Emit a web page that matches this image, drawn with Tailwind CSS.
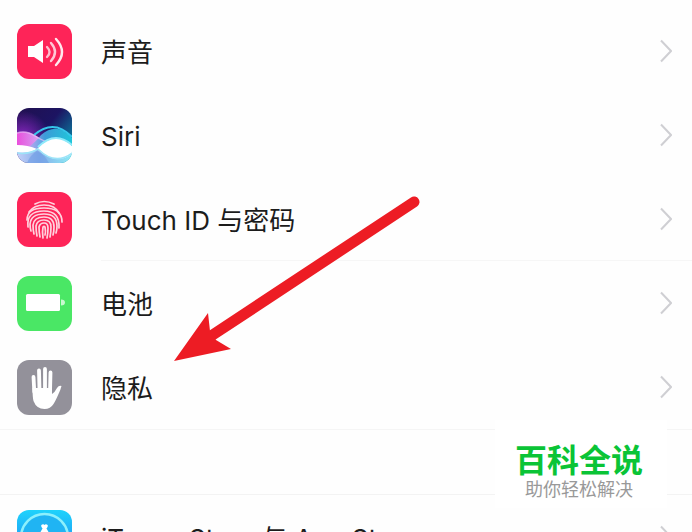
<!DOCTYPE html>
<html lang="zh-CN">
  <head>
    <meta charset="UTF-8" />
    <meta name="viewport" content="width=device-width, initial-scale=1.0" />
    <title>设置</title>
    <script src="https://cdn.jsdelivr.net/npm/@tailwindcss/browser@4"></script>
  </head>
  <body class="relative h-screen overflow-hidden bg-[#fefefe] font-[Inter,'Noto_Sans_CJK_SC',sans-serif] text-[26px] leading-8 text-[#1c1c1c]">
    <main class="pt-[9px]">
      <!-- 第一组 -->
      <ul class="border-b border-[#f5f5f5]">
        <li>
          <a href="#" class="flex h-[84px] items-center gap-[29px] pl-[17px] pr-5">
            <svg class="size-[55px] shrink-0" viewBox="0 0 55 55" fill="none">
              <rect width="55" height="55" rx="12" fill="#fe2458" />
              <path d="M11 22h6l9-6v23l-9-6h-6z" fill="#fff" />
              <g stroke="#fff" stroke-width="2.400" stroke-linecap="round">
                <path d="M30 23q5 5 0 10" opacity=".7" />
                <path d="M34 19q8 9 0 18" opacity=".75" />
                <path d="M39 15q12 13 0 26" opacity=".9" />
              </g>
            </svg>
            <span class="flex-1 pt-1">声音</span>
            <svg class="h-6 w-3 shrink-0" viewBox="0 0 12 24" fill="none" stroke="#cfcfd3" stroke-width="2">
              <path d="M1 1.500l10 10.500-10 10.500" />
            </svg>
          </a>
        </li>
        <li>
          <a href="#" class="flex h-[84px] items-center gap-[29px] pl-[17px] pr-5">
            <svg class="size-[55px] shrink-0" viewBox="0 0 55 55" fill="none">
              <defs>
                <clipPath id="siriClip"><rect width="55" height="55" rx="12" /></clipPath>
                <linearGradient id="siriSky" x1="0" y1="0" x2="1" y2=".8">
                  <stop offset="0" stop-color="#21104f" />
                  <stop offset=".5" stop-color="#1c1462" />
                  <stop offset="1" stop-color="#0596ae" />
                </linearGradient>
                <radialGradient id="siriPurple" cx=".1" cy=".55" r=".5">
                  <stop offset="0" stop-color="#8e27c4" />
                  <stop offset="1" stop-color="#8e27c4" stop-opacity="0" />
                </radialGradient>
                <linearGradient id="siriPink" x1="0" x2="1" y1="0" y2="0">
                  <stop offset="0" stop-color="#ea4fdc" />
                  <stop offset=".5" stop-color="#d69af0" />
                  <stop offset="1" stop-color="#8fd0f5" />
                </linearGradient>
                <linearGradient id="siriBlue" x1="0" x2="1" y1="0" y2="0">
                  <stop offset="0" stop-color="#c3a9ee" />
                  <stop offset=".4" stop-color="#3fa9e4" />
                  <stop offset="1" stop-color="#22cfe0" />
                </linearGradient>
                <linearGradient id="siriFloor" x1="0" x2="1" y1="0" y2="0">
                  <stop offset="0" stop-color="#c3d0f8" />
                  <stop offset=".4" stop-color="#86aeea" />
                  <stop offset="1" stop-color="#8decf6" />
                </linearGradient>
              </defs>
              <g clip-path="url(#siriClip)">
                <path d="M0 0h55v55H0z" fill="url(#siriSky)" />
                <path d="M0 0h55v55H0z" fill="url(#siriPurple)" />
                <path d="M0 25q9-3 18 2 12 8 22 14H0z" fill="url(#siriPink)" />
                <path d="M10 40q8-5 14-13 16-14 31 3v14H10z" fill="url(#siriBlue)" opacity=".9" />
                <path d="M17 27q20-17 38 2" stroke="#35c6ea" stroke-width="2" />
                <path d="M0 25q9-3 18 3 9 6 20 8" stroke="#edbdf6" stroke-width="1.500" opacity=".7" />
                <path d="M0 41h55v14H0z" fill="url(#siriFloor)" />
                <path d="M0 37q11 0 20 4 18-20 35-3v8q-17 12-35-5-9 5-20 3z" fill="#fff" />
                <path d="M21 39q17-17 34-2" stroke="#8feafa" stroke-width="2" />
                <path d="M0 45q11 2 21-4 17 17 34 4" stroke="#9ce3f8" stroke-width="1.500" />
                <path d="M20 43q7 3 12 12H10q3-8 10-12z" fill="#6f9ce4" opacity=".6" />
              </g>
            </svg>
            <span class="flex-1 pt-1">Siri</span>
            <svg class="h-6 w-3 shrink-0" viewBox="0 0 12 24" fill="none" stroke="#cfcfd3" stroke-width="2">
              <path d="M1 1.500l10 10.500-10 10.500" />
            </svg>
          </a>
        </li>
        <li>
          <a href="#" class="flex h-[84px] items-center gap-[29px] pl-[17px]">
            <svg class="size-[55px] shrink-0" viewBox="0 0 55 55" fill="none">
              <rect width="55" height="55" rx="12" fill="#fe2458" />
              <g stroke="#ffd3de" stroke-width="1.700" stroke-linecap="round">
                <path d="M18 12q9-5 19 0" />
                <path d="M12 20q5-7 15-7 11 0 15 8" />
                <path d="M10 28q0-12 17-12 18 0 18 14" />
                <path d="M11 35q-2-16 16-16 16 0 15 17" />
                <path d="M14 39q-1-3-1-7 1-10 14-10 13 0 13 12 0 4-1 7" />
                <path d="M17 42q-1-4-1-9 1-8 11-8 10 0 10 10 0 5-1 8" />
                <path d="M20 44q-1-5-1-10 1-6 8-6t7 7q0 5-1 10" />
                <path d="M23 45q-1-5-1-10 1-4 5-4t4 5q0 5-1 10" />
                <path d="M26 46q-1-6 0-11 1-1 2 0 1 5 0 8" />
              </g>
            </svg>
            <span class="flex h-full flex-1 items-center border-b border-[#f6f6f6] pr-5">
              <span class="flex-1 pt-1">Touch ID 与密码</span>
              <svg class="h-6 w-3 shrink-0" viewBox="0 0 12 24" fill="none" stroke="#cfcfd3" stroke-width="2">
                <path d="M1 1.500l10 10.500-10 10.500" />
              </svg>
            </span>
          </a>
        </li>
        <li>
          <a href="#" class="flex h-[84px] items-center gap-[29px] pl-[17px] pr-5">
            <svg class="size-[55px] shrink-0" viewBox="0 0 55 55">
              <rect width="55" height="55" rx="12" fill="#4ae765" />
              <rect x="9" y="18" width="34" height="17" rx="1.500" fill="#fff" />
              <path d="M44 23.500q4 0 4 3t-4 3z" fill="#c8f9d0" />
            </svg>
            <span class="flex-1 pt-1">电池</span>
            <svg class="h-6 w-3 shrink-0" viewBox="0 0 12 24" fill="none" stroke="#cfcfd3" stroke-width="2">
              <path d="M1 1.500l10 10.500-10 10.500" />
            </svg>
          </a>
        </li>
        <li>
          <a href="#" class="flex h-[84px] items-center gap-[29px] pl-[17px] pr-5">
            <svg class="size-[55px] shrink-0" viewBox="0 0 55 55" fill="none">
              <rect width="55" height="55" rx="12" fill="#93919a" />
              <g stroke="#fff" stroke-width="3.800" stroke-linecap="round">
                <path d="M16.500 17l.8 15M22 10.500l.5 20M28 9v22M33.500 12.500l-.5 20" />
              </g>
              <path d="M15.500 28h19.500v6q3-2 5-6 2-3 4.500-2-1 4-3 8-3 7-5 10-3 5-9 5-8 0-11-8-1-4-1-13z" fill="#fff" />
            </svg>
            <span class="flex-1 pt-1">隐私</span>
            <svg class="h-6 w-3 shrink-0" viewBox="0 0 12 24" fill="none" stroke="#cfcfd3" stroke-width="2">
              <path d="M1 1.500l10 10.500-10 10.500" />
            </svg>
          </a>
        </li>
      </ul>

      <!-- 第二组 -->
      <ul class="mt-16 border-t border-[#f3f3f3]">
        <li>
          <a href="#" class="flex h-[84px] items-center gap-[29px] pl-[17px] pr-5">
            <svg class="size-[55px] shrink-0" viewBox="0 0 55 55" fill="none">
              <defs>
                <linearGradient id="storeBg" x1="0" y1="0" x2="0" y2="1">
                  <stop offset="0" stop-color="#1fd3fb" />
                  <stop offset="1" stop-color="#1d77f2" />
                </linearGradient>
              </defs>
              <rect width="55" height="55" rx="12" fill="url(#storeBg)" />
              <circle cx="27.500" cy="27.500" r="23.500" fill="#20b4f3" stroke="#8cf0fc" stroke-width="2.500" />
              <path d="M26 16l14 24M29 16L15 40M11 33h33" stroke="#fff" stroke-width="3.500" stroke-linecap="round" />
            </svg>
            <span class="flex-1 pt-1">iTunes Store 与 App Store</span>
            <svg class="h-6 w-3 shrink-0" viewBox="0 0 12 24" fill="none" stroke="#cfcfd3" stroke-width="2">
              <path d="M1 1.500l10 10.500-10 10.500" />
            </svg>
          </a>
        </li>
      </ul>
    </main>

    <!-- 红色箭头 -->
    <svg class="pointer-events-none absolute left-[173px] top-[196px] h-[166px] w-[248px]" viewBox="173 196 248 166" fill="none">
      <path d="M414 202L208 338" stroke="#ed1c24" stroke-width="11" stroke-linecap="round" />
      <path d="M174 361l34-48 2 18 6 9 15 9z" fill="#ed1c24" />
    </svg>

    <!-- 水印 -->
    <div class="absolute bottom-6 right-[25px] flex h-[88px] w-[172px] flex-col items-center justify-center bg-white pr-1 pt-2 font-['Noto_Sans_CJK_SC',sans-serif]">
      <strong class="text-[32px] font-bold leading-10 text-[#0ac436]">百科全说</strong>
      <span class="text-[18px] leading-5 text-[#999999]">助你轻松解决</span>
    </div>
  </body>
</html>
